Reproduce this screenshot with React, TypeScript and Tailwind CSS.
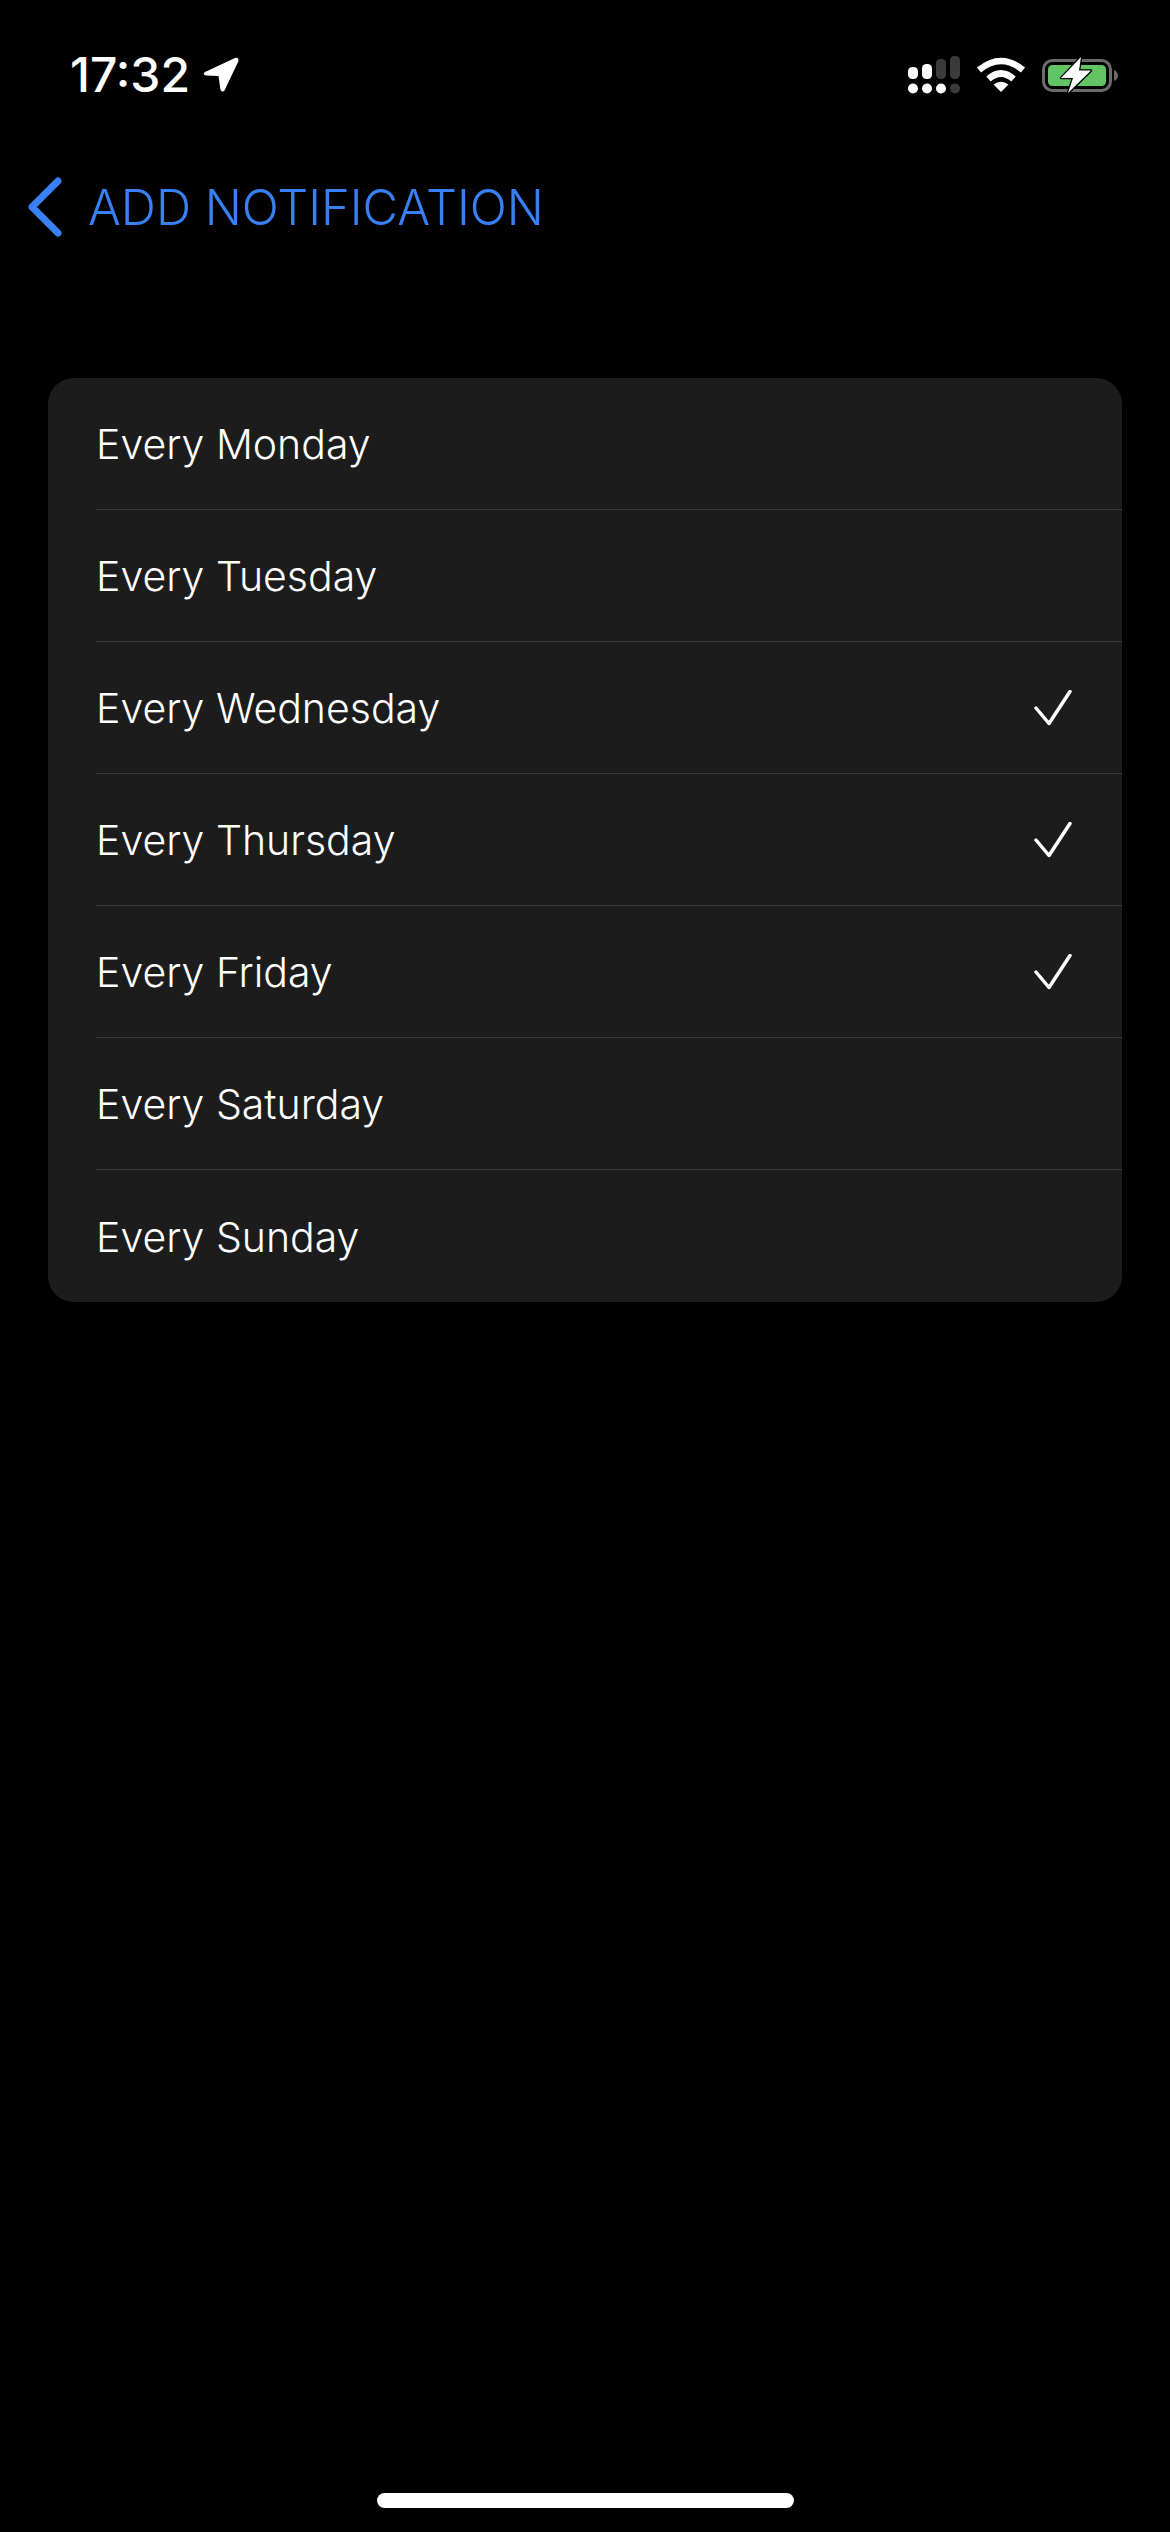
const days = [
  { name: 'Every Monday', checked: false },
  { name: 'Every Tuesday', checked: false },
  { name: 'Every Wednesday', checked: true },
  { name: 'Every Thursday', checked: true },
  { name: 'Every Friday', checked: true },
  { name: 'Every Saturday', checked: false },
  { name: 'Every Sunday', checked: false },
];

function LocationArrow() {
  return (
    <svg width="36" height="36" viewBox="0 0 36 36" className="ml-[13px]">
      <path d="M32 1 L2 15 Q-1 17.5 3 18.5 L15.5 19 L17.5 33 Q19.5 36 21.5 33.5 L35.5 4 Q36 0 32 1 Z" fill="#fff" />
    </svg>
  );
}

function SignalIcon() {
  return (
    <svg width="52" height="38" viewBox="0 0 52 38">
      <rect x="0" y="11" width="10" height="12" rx="4.5" fill="#fff" />
      <rect x="14" y="8" width="10" height="15" rx="4.5" fill="#fff" />
      <rect x="28" y="3" width="10" height="20" rx="4.5" fill="#3a3a3a" />
      <rect x="42" y="0" width="10" height="23" rx="4.5" fill="#3a3a3a" />
      <circle cx="5" cy="32.5" r="5" fill="#fff" />
      <circle cx="19" cy="32.5" r="5" fill="#fff" />
      <circle cx="33" cy="32.5" r="5" fill="#fff" />
      <circle cx="47" cy="32.5" r="5" fill="#3a3a3a" />
    </svg>
  );
}

function WifiIcon() {
  return (
    <svg width="50" height="36" viewBox="0 0 50 36" fill="none" stroke="#fff" strokeWidth="6.5">
      <path d="M3 13 Q25 -5 47 13" />
      <path d="M12.5 22 Q25 11 37.5 22" />
      <path d="M25 35 L17.5 27.5 Q25 22 32.5 27.5 Z" fill="#fff" stroke="none" />
    </svg>
  );
}

function BatteryIcon() {
  return (
    <svg width="78" height="38" viewBox="0 0 78 38">
      <rect x="1.5" y="4.5" width="67" height="30" rx="9" fill="none" stroke="#6b6b6b" strokeWidth="3" />
      <rect x="6" y="9" width="58" height="21" rx="4.5" fill="#63c466" />
      <path d="M72 14 Q76 16 76 19.5 Q76 23 72 25 Z" fill="#6b6b6b" />
      <path
        d="M39 1 L19 22 H31 L26 37 L49 14.5 H37 Z"
        fill="#fff"
        stroke="#000"
        strokeWidth="2.5"
        strokeLinejoin="round"
        paintOrder="stroke"
      />
    </svg>
  );
}

function Check() {
  return (
    <svg width="38" height="38" viewBox="0 0 38 38" fill="none" stroke="#fff" strokeWidth="3.5" strokeLinecap="round" strokeLinejoin="round" className="mt-[2px]">
      <path d="M2 18 L15 33.5 L36 1.5" />
    </svg>
  );
}

export default function App() {
  return (
    <div className="flex flex-col h-[2532px] bg-black text-white font-['Inter',sans-serif]">
      <div className="flex items-center justify-between h-[56px] mt-[47px] pl-[70px] pr-[50px]">
        <div className="flex items-center">
          <span className="text-[48px] leading-none font-medium">17:32</span>
          <LocationArrow />
        </div>
        <div className="flex items-center gap-[16px]">
          <SignalIcon />
          <WifiIcon />
          <BatteryIcon />
        </div>
      </div>

      <div className="flex items-center h-[60px] mt-[74px] pl-[27px]">
        <svg width="36" height="60" viewBox="0 0 36 60" fill="none" stroke="#3880f6" strokeWidth="7" strokeLinecap="round" strokeLinejoin="round">
          <path d="M31 4 L5 30 L31 56" />
        </svg>
        <span className="ml-[25px] pt-[2px] text-[48.8px] leading-none font-[350] text-[#3880f6]">ADD NOTIFICATION</span>
      </div>

      <div className="mt-[141px] mx-[48px] bg-[#1c1c1c] rounded-[26px] overflow-hidden">
        {days.map((day, i) => (
          <div key={day.name} className="pl-[48px] h-[132px]">
            <div className={i < days.length - 1 ? 'flex items-center justify-between h-full pr-[50px] border-b border-[#3a3a3a]' : 'flex items-center justify-between h-full pr-[50px]'}>
              <span className="pt-[2px] text-[41px] leading-none font-[350]">{day.name}</span>
              {day.checked && <Check />}
            </div>
          </div>
        ))}
      </div>

      <div className="mt-auto mb-[24px] mx-auto w-[417px] h-[15px] rounded-full bg-white" />
    </div>
  );
}
